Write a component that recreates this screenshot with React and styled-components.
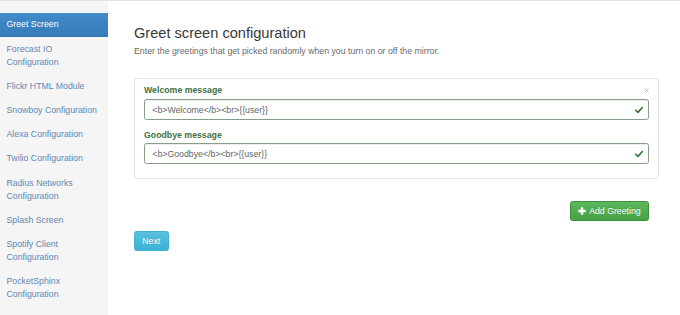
import React from "react";
import styled, { createGlobalStyle } from "styled-components";

const GlobalStyle = createGlobalStyle`
  html, body { margin: 0; padding: 0; background: #ffffff; }
  body {
    font-family: "Liberation Sans", Arial, "Helvetica Neue", sans-serif;
    font-size: 8.75px;
    color: #333333;
  }
  * { box-sizing: border-box; }
`;

const Page = styled.div`
  display: flex;
  min-height: 315px;
  border-top: 1px solid #e3e3e3;
`;

const Sidebar = styled.nav`
  width: 108px;
  flex: 0 0 108px;
  background: #f5f5f5;
  padding-top: 11.8px;
  display: flex;
  flex-direction: column;
`;

const NavItem = styled.a`
  display: block;
  padding: 5.6px 6.5px;
  line-height: 13px;
  font-size: 8.75px;
  text-decoration: none;
  color: ${(p) => (p.$active ? "#ffffff" : "#6187b2")};
  background: ${(p) =>
    p.$active ? "linear-gradient(to bottom, #428bca 0%, #3679b8 100%)" : "transparent"};
`;

const Main = styled.main`
  flex: 1;
  padding: 24.4px 21px 0 26px;
  display: flex;
  flex-direction: column;
`;

const Title = styled.h3`
  margin: 0;
  font-size: 14.6px;
  line-height: 1.1;
  font-weight: 400;
  color: #383838;
`;

const Subtitle = styled.p`
  margin: 3.9px 0 0;
  font-size: 8.75px;
  line-height: 12.3px;
  color: #6a6a6a;
`;

const Panel = styled.div`
  position: relative;
  margin-top: 20.3px;
  border: 1px solid #e3e3e3;
  border-radius: 3px;
  padding: 5.5px 9px 14.2px;
`;

const Close = styled.span`
  position: absolute;
  top: 9.2px;
  right: 9.5px;
  width: 5px;
  height: 5px;
  display: flex;
`;

const FormGroup = styled.div`
  & + & { margin-top: 8.6px; }
`;

const Label = styled.label`
  display: block;
  font-weight: bold;
  font-size: 8.75px;
  line-height: 12.3px;
  color: #42703f;
  margin-bottom: 2.5px;
`;

const InputWrap = styled.div`
  position: relative;
`;

const Input = styled.input`
  display: block;
  width: 100%;
  height: 20.7px;
  padding: 0 7.3px;
  border: 1px solid #869e86;
  border-radius: 2.4px;
  box-shadow: inset 0 1px 1px rgba(0, 0, 0, 0.075);
  font-family: "Liberation Sans", Arial, sans-serif;
  font-size: 8.75px;
  color: #666666;
  background: #ffffff;
  outline: none;
`;

const Feedback = styled.span`
  position: absolute;
  right: 6.5px;
  top: 50%;
  transform: translateY(-50%);
  display: flex;
`;

const ButtonRow = styled.div`
  display: flex;
  justify-content: flex-end;
  padding-right: 10px;
  margin-top: 21.7px;
`;

const Button = styled.button`
  display: inline-flex;
  align-items: center;
  gap: 3px;
  height: 20.6px;
  padding: 0 7.3px;
  border-radius: 2.4px;
  font-family: "Liberation Sans", Arial, sans-serif;
  font-size: 8.75px;
  color: #ffffff;
  text-shadow: 0 -1px 0 rgba(0, 0, 0, 0.15);
  cursor: pointer;
  border: 1px solid ${(p) => (p.$variant === "success" ? "#3e8f3e" : "#3fb0d2")};
  background: ${(p) =>
    p.$variant === "success"
      ? "linear-gradient(to bottom, #5cb85c 0%, #46a046 100%)"
      : "linear-gradient(to bottom, #5bc0de 0%, #3ab3d8 100%)"};
`;

const NextRow = styled.div`
  display: flex;
  margin-top: 9.4px;
`;

const CheckIcon = () => (
  <svg width="8" height="7" viewBox="0 0 8 7">
    <path d="M0.8 3.9 L3 5.9 L7.3 1" fill="none" stroke="#3c763d" strokeWidth="1.7" strokeLinecap="round" strokeLinejoin="round" />
  </svg>
);

const PlusIcon = () => (
  <svg width="8" height="8" viewBox="0 0 8 8">
    <rect x="2.8" y="0.3" width="2.4" height="7.4" fill="#ffffff" />
    <rect x="0.3" y="2.8" width="7.4" height="2.4" fill="#ffffff" />
  </svg>
);

const CloseIcon = () => (
  <svg width="5" height="5" viewBox="0 0 5 5">
    <path d="M0.5 0.5 L4.5 4.5 M4.5 0.5 L0.5 4.5" stroke="#b5b5b5" strokeWidth="0.9" />
  </svg>
);

const navItems = [
  "Greet Screen",
  "Forecast IO Configuration",
  "Flickr HTML Module",
  "Snowboy Configuration",
  "Alexa Configuration",
  "Twilio Configuration",
  "Radius Networks Configuration",
  "Splash Screen",
  "Spotify Client Configuration",
  "PocketSphinx Configuration",
];

const greetings = [
  { label: "Welcome message", value: "<b>Welcome</b><br>{{user}}" },
  { label: "Goodbye message", value: "<b>Goodbye</b><br>{{user}}" },
];

export default function App() {
  return (
    <>
      <GlobalStyle />
      <Page>
        <Sidebar>
          {navItems.map((item, i) => (
            <NavItem key={item} $active={i === 0} href="#">
              {item}
            </NavItem>
          ))}
        </Sidebar>
        <Main>
          <Title>Greet screen configuration</Title>
          <Subtitle>
            Enter the greetings that get picked randomly when you turn on or off the mirror.
          </Subtitle>
          <Panel>
            <Close>
              <CloseIcon />
            </Close>
            {greetings.map((g) => (
              <FormGroup key={g.label}>
                <Label>{g.label}</Label>
                <InputWrap>
                  <Input defaultValue={g.value} readOnly />
                  <Feedback>
                    <CheckIcon />
                  </Feedback>
                </InputWrap>
              </FormGroup>
            ))}
          </Panel>
          <ButtonRow>
            <Button $variant="success">
              <PlusIcon />
              Add Greeting
            </Button>
          </ButtonRow>
          <NextRow>
            <Button $variant="info">Next</Button>
          </NextRow>
        </Main>
      </Page>
    </>
  );
}
